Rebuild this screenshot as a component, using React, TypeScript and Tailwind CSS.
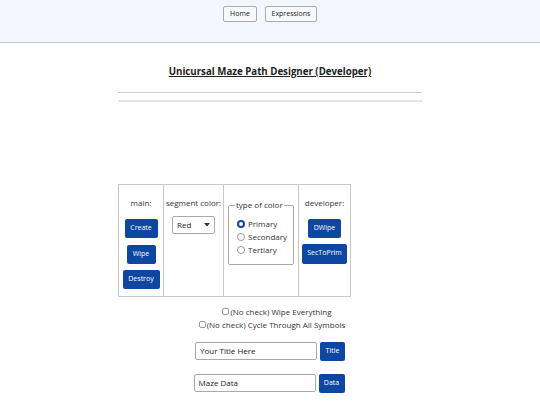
import React from "react";

const font = { fontFamily: '"Open Sans", "Noto Sans", sans-serif' };

function Btn({ children, className = "" }: { children: React.ReactNode; className?: string }) {
  return (
    <div className={"bg-[#0d47a1] text-white text-[7px] rounded-[2px] flex items-center justify-center " + className}>
      {children}
    </div>
  );
}

function Radio({ checked, label }: { checked?: boolean; label: string }) {
  return (
    <div className="flex items-center gap-[3px] h-[13px]">
      {checked ? (
        <div className="w-[8px] h-[8px] rounded-full border-[2.5px] border-[#0d47a1] bg-white" />
      ) : (
        <div className="w-[8px] h-[8px] rounded-full border border-[#999] bg-white" />
      )}
      <span className="text-[8px] text-[#333]">{label}</span>
    </div>
  );
}

export default function App() {
  return (
    <div className="w-[540px] h-[405px] bg-white overflow-hidden text-[#222]" style={font}>
      <div className="h-[43px] bg-[#f4f6fe] border-b border-[#c9cad6] flex justify-center gap-[8px] pt-[6px]">
        <div className="h-[16px] w-[34px] border border-[#a8abb8] rounded-[2px] bg-[#f8f9fd] text-[7px] flex items-center justify-center">Home</div>
        <div className="h-[16px] w-[52px] border border-[#a8abb8] rounded-[2px] bg-[#f8f9fd] text-[7px] flex items-center justify-center">Expressions</div>
      </div>
      <div className="flex flex-col items-center">
        <div className="mt-[22px] text-[9.7px] font-bold underline text-[#222]">Unicursal Maze Path Designer (Developer)</div>
        <div className="mt-[12px] w-[304px] h-[1px] bg-[#cfcfcf]" />
        <div className="mt-[7px] w-[304px] h-[2px] bg-[#e4e4e8]" />
        <div className="w-[304px] mt-[82px]">
          <div className="flex w-[233px] h-[113px] border border-[#c8c8c8]">
            <div className="w-[45px] border-r border-[#c8c8c8] flex flex-col items-center pt-[13px]">
              <div className="text-[8px] text-[#333] leading-[10px]">main:</div>
              <Btn className="mt-[11px] w-[33px] h-[19px]">Create</Btn>
              <Btn className="mt-[7px] w-[29px] h-[19px]">Wipe</Btn>
              <Btn className="mt-[6px] w-[37px] h-[19px]">Destroy</Btn>
            </div>
            <div className="w-[60px] border-r border-[#c8c8c8] flex flex-col items-center pt-[13px]">
              <div className="text-[8px] text-[#333] leading-[10px]">segment color:</div>
              <div className="mt-[8px] w-[43px] h-[18px] border border-[#aaa] rounded-[2px] flex items-center justify-between px-[4px] text-[8px]">
                <span>Red</span>
                <svg width="6" height="4" viewBox="0 0 6 4"><path d="M0 0h6L3 3.5z" fill="#333" /></svg>
              </div>
            </div>
            <div className="w-[75px] border-r border-[#c8c8c8] flex flex-col items-center pt-[20px]">
              <div className="relative w-[66px] h-[60px] border border-[#aaa] rounded-[2px] pt-[12px] pl-[8px]">
                <div className="absolute -top-[6px] left-[6px] bg-white px-[1px] text-[8px] text-[#333] leading-[10px]">type of color</div>
                <Radio checked label="Primary" />
                <Radio label="Secondary" />
                <Radio label="Tertiary" />
              </div>
            </div>
            <div className="flex-1 flex flex-col items-center pt-[13px]">
              <div className="text-[8px] text-[#333] leading-[10px]">developer:</div>
              <Btn className="mt-[11px] w-[33px] h-[19px]">DWipe</Btn>
              <Btn className="mt-[6px] w-[45px] h-[20px]">SecToPrim</Btn>
            </div>
          </div>
        </div>
        <div className="mt-[8px] flex flex-col items-center text-[8px] text-[#333] leading-[13px]">
          <div className="flex items-center gap-[1px] ml-[14px]"><span className="w-[7px] h-[7px] border border-[#999] rounded-[2px] inline-block" />(No check) Wipe Everything</div>
          <div className="flex items-center gap-[1px] ml-[4px]"><span className="w-[7px] h-[7px] border border-[#999] rounded-[2px] inline-block" />(No check) Cycle Through All Symbols</div>
        </div>
        <div className="mt-[11px] flex items-center gap-[3px]">
          <div className="w-[122px] h-[18px] border border-[#aaa] rounded-[2px] text-[8px] flex items-center pl-[4px]">Your Title Here</div>
          <Btn className="w-[25px] h-[19px]">Title</Btn>
        </div>
        <div className="mt-[13px] flex items-center gap-[3px] -ml-[2px]">
          <div className="w-[122px] h-[18px] border border-[#aaa] rounded-[2px] text-[8px] flex items-center pl-[4px]">Maze Data</div>
          <Btn className="w-[26px] h-[19px]">Data</Btn>
        </div>
      </div>
    </div>
  );
}
